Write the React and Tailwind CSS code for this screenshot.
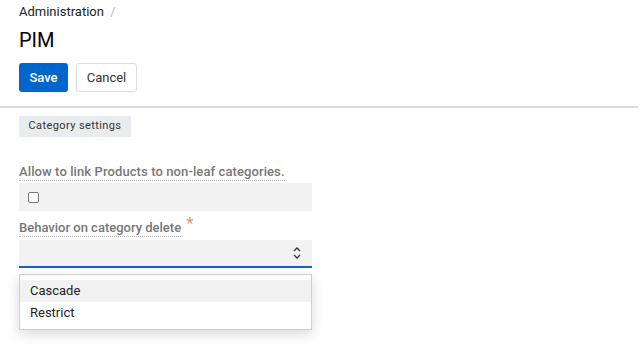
import React from 'react';

const Chevrons = () => (
  <svg width="10" height="16" viewBox="0 0 10 16" fill="none" stroke="#333" strokeWidth="1.3">
    <path d="M2 6 L5 3 L8 6" />
    <path d="M2 10 L5 13 L8 10" />
  </svg>
);

export default function App() {
  return (
    <div className="w-[640px] h-[353px] bg-white overflow-hidden font-['Roboto',sans-serif] text-[#222]">
      {/* header */}
      <div className="pl-[19px] pt-[3px]">
        <div className="text-[13px] leading-[17px] text-[#222]">
          Administration <span className="text-[#bbb] ml-[3px]">/</span>
        </div>
        <h1 className="mt-[8px] text-[20px] leading-[24px] text-black">PIM</h1>
        <div className="mt-[11px] flex gap-[8px]">
          <button className="h-[29px] w-[49px] rounded-[3px] bg-[#0066cc] text-white text-[13px] font-medium">Save</button>
          <button className="h-[29px] w-[61px] rounded-[3px] border border-[#ddd] bg-white text-[#333] text-[13px]">Cancel</button>
        </div>
      </div>
      <div className="mt-[14px] mr-[2px] h-[2px] bg-[#dcdcdc]" />

      {/* form */}
      <div className="pl-[19px] pt-[8px] flex flex-col items-start">
        <div className="h-[21px] w-[112px] flex items-center justify-center bg-[#e9ecef] text-[11px] text-[#333] tracking-[0.4px]">Category settings</div>

        <div className="mt-[27px] h-[17px] text-[13px] leading-[16px] font-medium text-[#777] border-b border-dotted border-[#bbb] tracking-[0.1px]">
          Allow to link Products to non-leaf categories.
        </div>
        <div className="mt-[2px] w-[293px] h-[28px] bg-[#f2f2f2] flex items-center pl-[9px]">
          <span className="w-[11px] h-[11px] rounded-[2px] border border-[#777] bg-white" />
        </div>

        <div className="mt-[5px] h-[21px] flex items-start">
          <span className="mt-[4px] h-[17px] text-[13px] leading-[16px] font-medium text-[#777] border-b border-dotted border-[#bbb]">
            Behavior on category delete
          </span>
          <span className="ml-[5px] text-[17px] leading-[14px] text-[#e39b6a]">*</span>
        </div>
        <div className="mt-[3px] w-[293px] h-[28px] bg-[#f2f2f2] border-b-2 border-[#1565c0] flex items-center justify-end pr-[10px]">
          <Chevrons />
        </div>

        <div className="relative">
          <div className="absolute left-0 top-[6px] w-[293px] border border-[#cfcfcf] bg-white shadow-[0_4px_12px_rgba(0,0,0,0.15)] py-[5px]">
            <div className="h-[22px] bg-[#f2f2f2] pl-[10px] text-[13px] leading-[22px] text-[#222]">Cascade</div>
            <div className="h-[22px] pl-[10px] text-[13px] leading-[22px] text-[#222]">Restrict</div>
          </div>
        </div>
      </div>
    </div>
  );
}
